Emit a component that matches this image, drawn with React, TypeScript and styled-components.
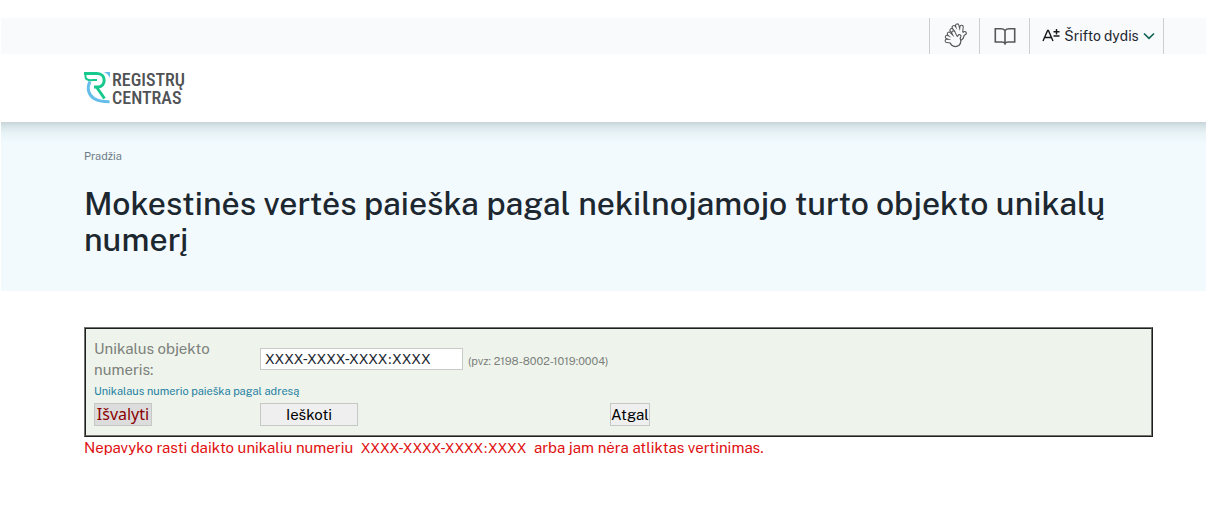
import React, { useState } from "react";
import styled, { createGlobalStyle } from "styled-components";

const GlobalStyle = createGlobalStyle`
  * { box-sizing: border-box; }
  body {
    margin: 0;
    background: #fff;
    color: #1c2730;
    font-family: "Public Sans", Inter, "Liberation Sans", sans-serif;
    font-size: 15px;
  }
`;

const Page = styled.div`
  padding: 18px 0 48px 1px;
`;

const UtilityBar = styled.div`
  display: flex;
  justify-content: flex-end;
  height: 36px;
  padding-right: 42px;
  background: #f9fafc;
`;

const UtilityButton = styled.button<{ $wide?: boolean }>`
  display: flex;
  align-items: center;
  justify-content: center;
  gap: 4px;
  width: ${(p) => (p.$wide ? "135px" : "50px")};
  padding: ${(p) => (p.$wide ? "0 0 0 4px" : "0")};
  border: 0;
  border-left: 1px solid #ccced1;
  border-right: ${(p) => (p.$wide ? "1px solid #ccced1" : "0")};
  background: transparent;
  color: #1c2730;
  font-family: inherit;
  font-size: ${(p) => (p.$wide ? "14px" : "13px")};
  white-space: nowrap;
`;

const Header = styled.header`
  display: flex;
  align-items: center;
  height: 68px;
  padding: 0 53px 0 83px;
`;

const LogoLink = styled.a`
  display: block;
  height: 36px;
`;

const Hero = styled.section`
  min-height: 169px;
  padding: 24px 53px 32px 83px;
  background: linear-gradient(#c6d4d8 0, #dae7ea 5px, #e9f4f7 12px, #f2fafe 22px);
`;

const Breadcrumb = styled.a`
  display: inline-block;
  color: #6e7b84;
  font-size: 11px;
  line-height: 16px;
  text-decoration: none;
`;

const Title = styled.h1`
  margin: 22px 0 0;
  font-size: 32px;
  font-weight: 500;
  line-height: 36px;
`;

const Main = styled.main`
  padding: 36px 53px 0 83px;
`;

const Panel = styled.form`
  display: grid;
  grid-template-columns: 166px 1fr;
  row-gap: 3px;
  padding: 9px 8px;
  border: 2px ridge #727472;
  background: #eef4eb;
`;

const FieldLabel = styled.label`
  max-width: 140px;
  color: #7c807c;
  line-height: 21px;
`;

const FieldRow = styled.div`
  display: flex;
  align-items: center;
  gap: 5px;
`;

const NumberInput = styled.input`
  width: 203px;
  height: 22px;
  padding: 0 4px;
  border: 1px solid #c8cbc8;
  border-radius: 0;
  background: #fff;
  color: #1c2730;
  font-family: "DejaVu Sans", sans-serif;
  font-size: 14px;
`;

const Hint = styled.span`
  padding-top: 4px;
  color: #7c807c;
  font-size: 11px;
  line-height: 16px;
`;

const AddressLink = styled.a`
  grid-column: 1 / -1;
  color: #257fa3;
  font-size: 11px;
  line-height: 17px;
  text-decoration: none;
`;

const ActionButton = styled.button<{ $width: number; $reset?: boolean }>`
  width: ${(p) => p.$width}px;
  height: 23px;
  padding: 0;
  border: 1px solid #c6c8c6;
  background: ${(p) => (p.$reset ? "#dcdcdc" : "#efefef")};
  color: ${(p) => (p.$reset ? "#8b0000" : "#000")};
  font-family: ${(p) => (p.$reset ? '"Noto Sans", sans-serif' : "inherit")};
  font-size: ${(p) => (p.$reset ? "16px" : "15px")};
  line-height: 21px;
  white-space: nowrap;
`;

const ActionRow = styled.div`
  display: grid;
  grid-template-columns: 350px auto;
  justify-content: start;
`;

const ErrorText = styled.p`
  margin: 0;
  color: #e01010;
  line-height: 22px;
`;

const Code = styled.span`
  margin: 0 4px;
  font-family: "DejaVu Sans", sans-serif;
  font-size: 14px;
`;

const Wordmark = styled.text`
  fill: #505255;
  font-family: "Roboto Condensed", Roboto, sans-serif;
  font-size: 18px;
  font-weight: 500;
`;

const FINGERS =
  "M9.5 18.5 3.8 17.8M10 16.5 4 14M11 15.5 6 10.8M13 15 10.4 9.6";

const Hand = () => (
  <g strokeLinecap="round">
    <g stroke="#55585b" fill="#55585b">
      <path d={FINGERS} strokeWidth="4.4" />
      <path d="M14.5 17 16.4 13.2" strokeWidth="4.2" />
      <circle cx="12.4" cy="18.2" r="6" stroke="none" />
    </g>
    <g stroke="#f9fafc" fill="#f9fafc">
      <path d={FINGERS} strokeWidth="2.3" />
      <path d="M14.5 17 16.4 13.2" strokeWidth="2" />
      <circle cx="12.4" cy="18.2" r="4.8" stroke="none" />
    </g>
  </g>
);

const HandsIcon = () => (
  <svg width="24" height="26" viewBox="0 0 24 26" fill="none" aria-hidden="true">
    <g transform="translate(4 -6) rotate(32 12 17)"><Hand /></g>
    <Hand />
  </svg>
);

const BookIcon = () => (
  <svg width="22" height="20" viewBox="0 0 22 20" fill="none" stroke="#55585b" strokeWidth="1.6" aria-hidden="true">
    <path d="M11 4.5C9.8 3 8.6 2.7 7 2.7H1.3V16H8C9.6 16 10.4 16.5 11 17.6 11.6 16.5 12.4 16 14 16H20.7V2.7H15C13.4 2.7 12.2 3 11 4.5ZM11 4.5V18.5" />
  </svg>
);

const TextSizeIcon = () => (
  <svg width="18" height="16" viewBox="0 0 18 16" fill="none" stroke="#15191c" strokeWidth="1.4" aria-hidden="true">
    <path d="M1 13 5.6 2.4H6.4L11 13M2.8 9.5H9.2M11.5 3.8H17.5M14.5 1V6.6M11.5 8H17.5" />
  </svg>
);

const ChevronIcon = () => (
  <svg width="12" height="8" viewBox="0 0 12 8" fill="none" stroke="#0d6250" strokeWidth="1.6" aria-hidden="true">
    <path d="M1 1.5 6 6.3 11 1.5" />
  </svg>
);

const Logo = () => (
  <svg width="112" height="40" viewBox="0 0 112 40" role="img" aria-label="Registrų centras">
    <g fill="none" strokeWidth="3">
      <path d="M6 11.5C2.5 18 4.5 25 10 28.6 14 31.4 18 31.8 25.5 31.8" stroke="#67bdea" />
      <path d="M0 3.5H13C22.5 3.5 22.5 17 13.5 17H10" stroke="#18c98d" />
      <path d="M1.5 4V6.5C1.5 9 3 10.2 7 10.2V10.2C9 10.2 9.5 10 13 10" stroke="#18c98d" strokeWidth="2" />
      <path d="M12.5 17 20.5 28.5" stroke="#18c98d" />
    </g>
    <path d="M19.5 2H26V8C25 5.5 23 3 19.5 2Z" fill="#67bdea" />
    <Wordmark x="28" y="16">REGISTRŲ</Wordmark>
    <Wordmark x="28" y="34">CENTRAS</Wordmark>
  </svg>
);

export default function App() {
  const [number, setNumber] = useState("XXXX-XXXX-XXXX:XXXX");
  return (
    <>
      <GlobalStyle />
      <Page>
        <UtilityBar>
          <UtilityButton type="button" aria-label="Gestų kalba"><HandsIcon /></UtilityButton>
          <UtilityButton type="button" aria-label="Lengvai skaitoma"><BookIcon /></UtilityButton>
          <UtilityButton type="button" $wide>
            <TextSizeIcon />
            Šrifto dydis
            <ChevronIcon />
          </UtilityButton>
        </UtilityBar>
        <Header>
          <LogoLink href="#"><Logo /></LogoLink>
        </Header>
        <Hero>
          <Breadcrumb href="#">Pradžia</Breadcrumb>
          <Title>Mokestinės vertės paieška pagal nekilnojamojo turto objekto unikalų numerį</Title>
        </Hero>
        <Main>
          <Panel onSubmit={(e) => e.preventDefault()}>
            <FieldLabel htmlFor="number">Unikalus objekto numeris:</FieldLabel>
            <FieldRow>
              <NumberInput id="number" value={number} onChange={(e) => setNumber(e.target.value)} />
              <Hint>(pvz: 2198-8002-1019:0004)</Hint>
            </FieldRow>
            <AddressLink href="#">Unikalaus numerio paieška pagal adresą</AddressLink>
            <ActionButton type="button" $width={58} $reset onClick={() => setNumber("")}>Išvalyti</ActionButton>
            <ActionRow>
              <ActionButton type="submit" $width={98}>Ieškoti</ActionButton>
              <ActionButton type="button" $width={40}>Atgal</ActionButton>
            </ActionRow>
          </Panel>
          <ErrorText>
            Nepavyko rasti daikto unikaliu numeriu <Code>XXXX-XXXX-XXXX:XXXX</Code> arba jam nėra atliktas vertinimas.
          </ErrorText>
        </Main>
      </Page>
    </>
  );
}
